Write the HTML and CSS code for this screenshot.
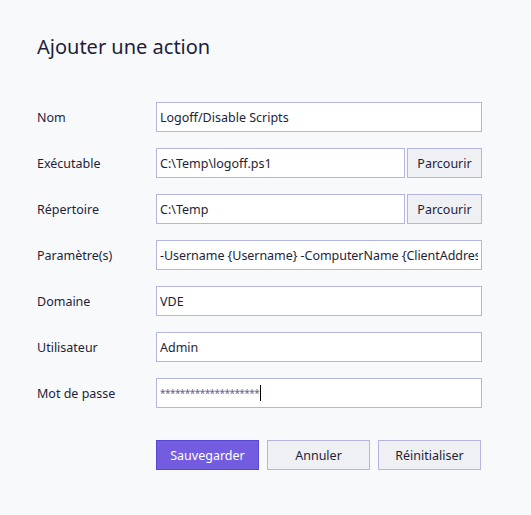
FILE: index.html
```html
<!DOCTYPE html>
<html lang="fr">
<head>
<meta charset="utf-8">
<title>Ajouter une action</title>
<link rel="stylesheet" href="styles.css">
</head>
<body>
<div class="dialog">
  <h1 class="title">Ajouter une action</h1>
  <form class="form">
    <label class="label">Nom</label>
    <div class="control"><input class="input" type="text" value="Logoff/Disable Scripts"></div>

    <label class="label">Exécutable</label>
    <div class="control"><input class="input" type="text" value="C:\Temp\logoff.ps1"><button type="button" class="btn browse">Parcourir</button></div>

    <label class="label">Répertoire</label>
    <div class="control"><input class="input" type="text" value="C:\Temp"><button type="button" class="btn browse">Parcourir</button></div>

    <label class="label">Paramètre(s)</label>
    <div class="control"><input class="input tight" type="text" value="-Username {Username} -ComputerName {ClientAddress}"></div>

    <label class="label">Domaine</label>
    <div class="control"><input class="input" type="text" value="VDE"></div>

    <label class="label">Utilisateur</label>
    <div class="control"><input class="input" type="text" value="Admin"></div>

    <label class="label">Mot de passe</label>
    <div class="control"><div class="input pwd"><span class="stars">********************</span><span class="caret"></span></div></div>

    <div class="actions">
      <button type="button" class="btn primary">Sauvegarder</button>
      <button type="button" class="btn secondary">Annuler</button>
      <button type="button" class="btn secondary">Réinitialiser</button>
    </div>
  </form>
</div>
</body>
</html>
```

FILE: styles.css
```css
html, body {
  margin: 0;
  padding: 0;
  background: #f8f9fb;
}
body {
  font-family: "Noto Sans", "Open Sans", sans-serif;
  font-size: 12.5px;
  color: #1e1e38;
  width: 531px;
  height: 515px;
}
.dialog {
  padding: 32px 49px 0 37px;
}
.title {
  margin: 0 0 40px 0;
  font-size: 20px;
  font-weight: 400;
  line-height: 30px;
  color: #1e1e38;
}
.form {
  display: grid;
  grid-template-columns: 119px 326px;
  row-gap: 16px;
  align-items: center;
}
.label {
  box-sizing: border-box;
  height: 30px;
  padding-top: 2px;
  line-height: 28px;
}
.control {
  display: flex;
  gap: 2px;
  height: 30px;
}
.input {
  flex: 1;
  min-width: 0;
  box-sizing: border-box;
  height: 30px;
  margin: 0;
  padding: 0 3px;
  border: 1px solid #b3b6e2;
  background: #ffffff;
  font: inherit;
  color: #1e1e38;
  outline: none;
}
.tight {
  letter-spacing: -0.05px;
}
.pwd {
  display: flex;
  align-items: center;
}
.stars {
  font-size: 10px;
  letter-spacing: -0.55px;
  color: #6a6090;
}
.caret {
  display: inline-block;
  width: 1px;
  height: 16px;
  background: #000;
  margin-left: 1px;
}
.btn {
  box-sizing: border-box;
  height: 30px;
  margin: 0;
  font: inherit;
  border: 1px solid #b3b6e2;
  background: #eff0f4;
  color: #1e1e38;
  padding: 0;
  cursor: pointer;
}
.browse {
  width: 75px;
  flex: none;
}
.actions {
  grid-column: 2;
  display: flex;
  gap: 8px;
  margin-top: 16px;
}
.actions .btn {
  width: 103px;
}
.primary {
  background: #735ce0;
  border-color: #5b45d4;
  color: #ffffff;
}
```
